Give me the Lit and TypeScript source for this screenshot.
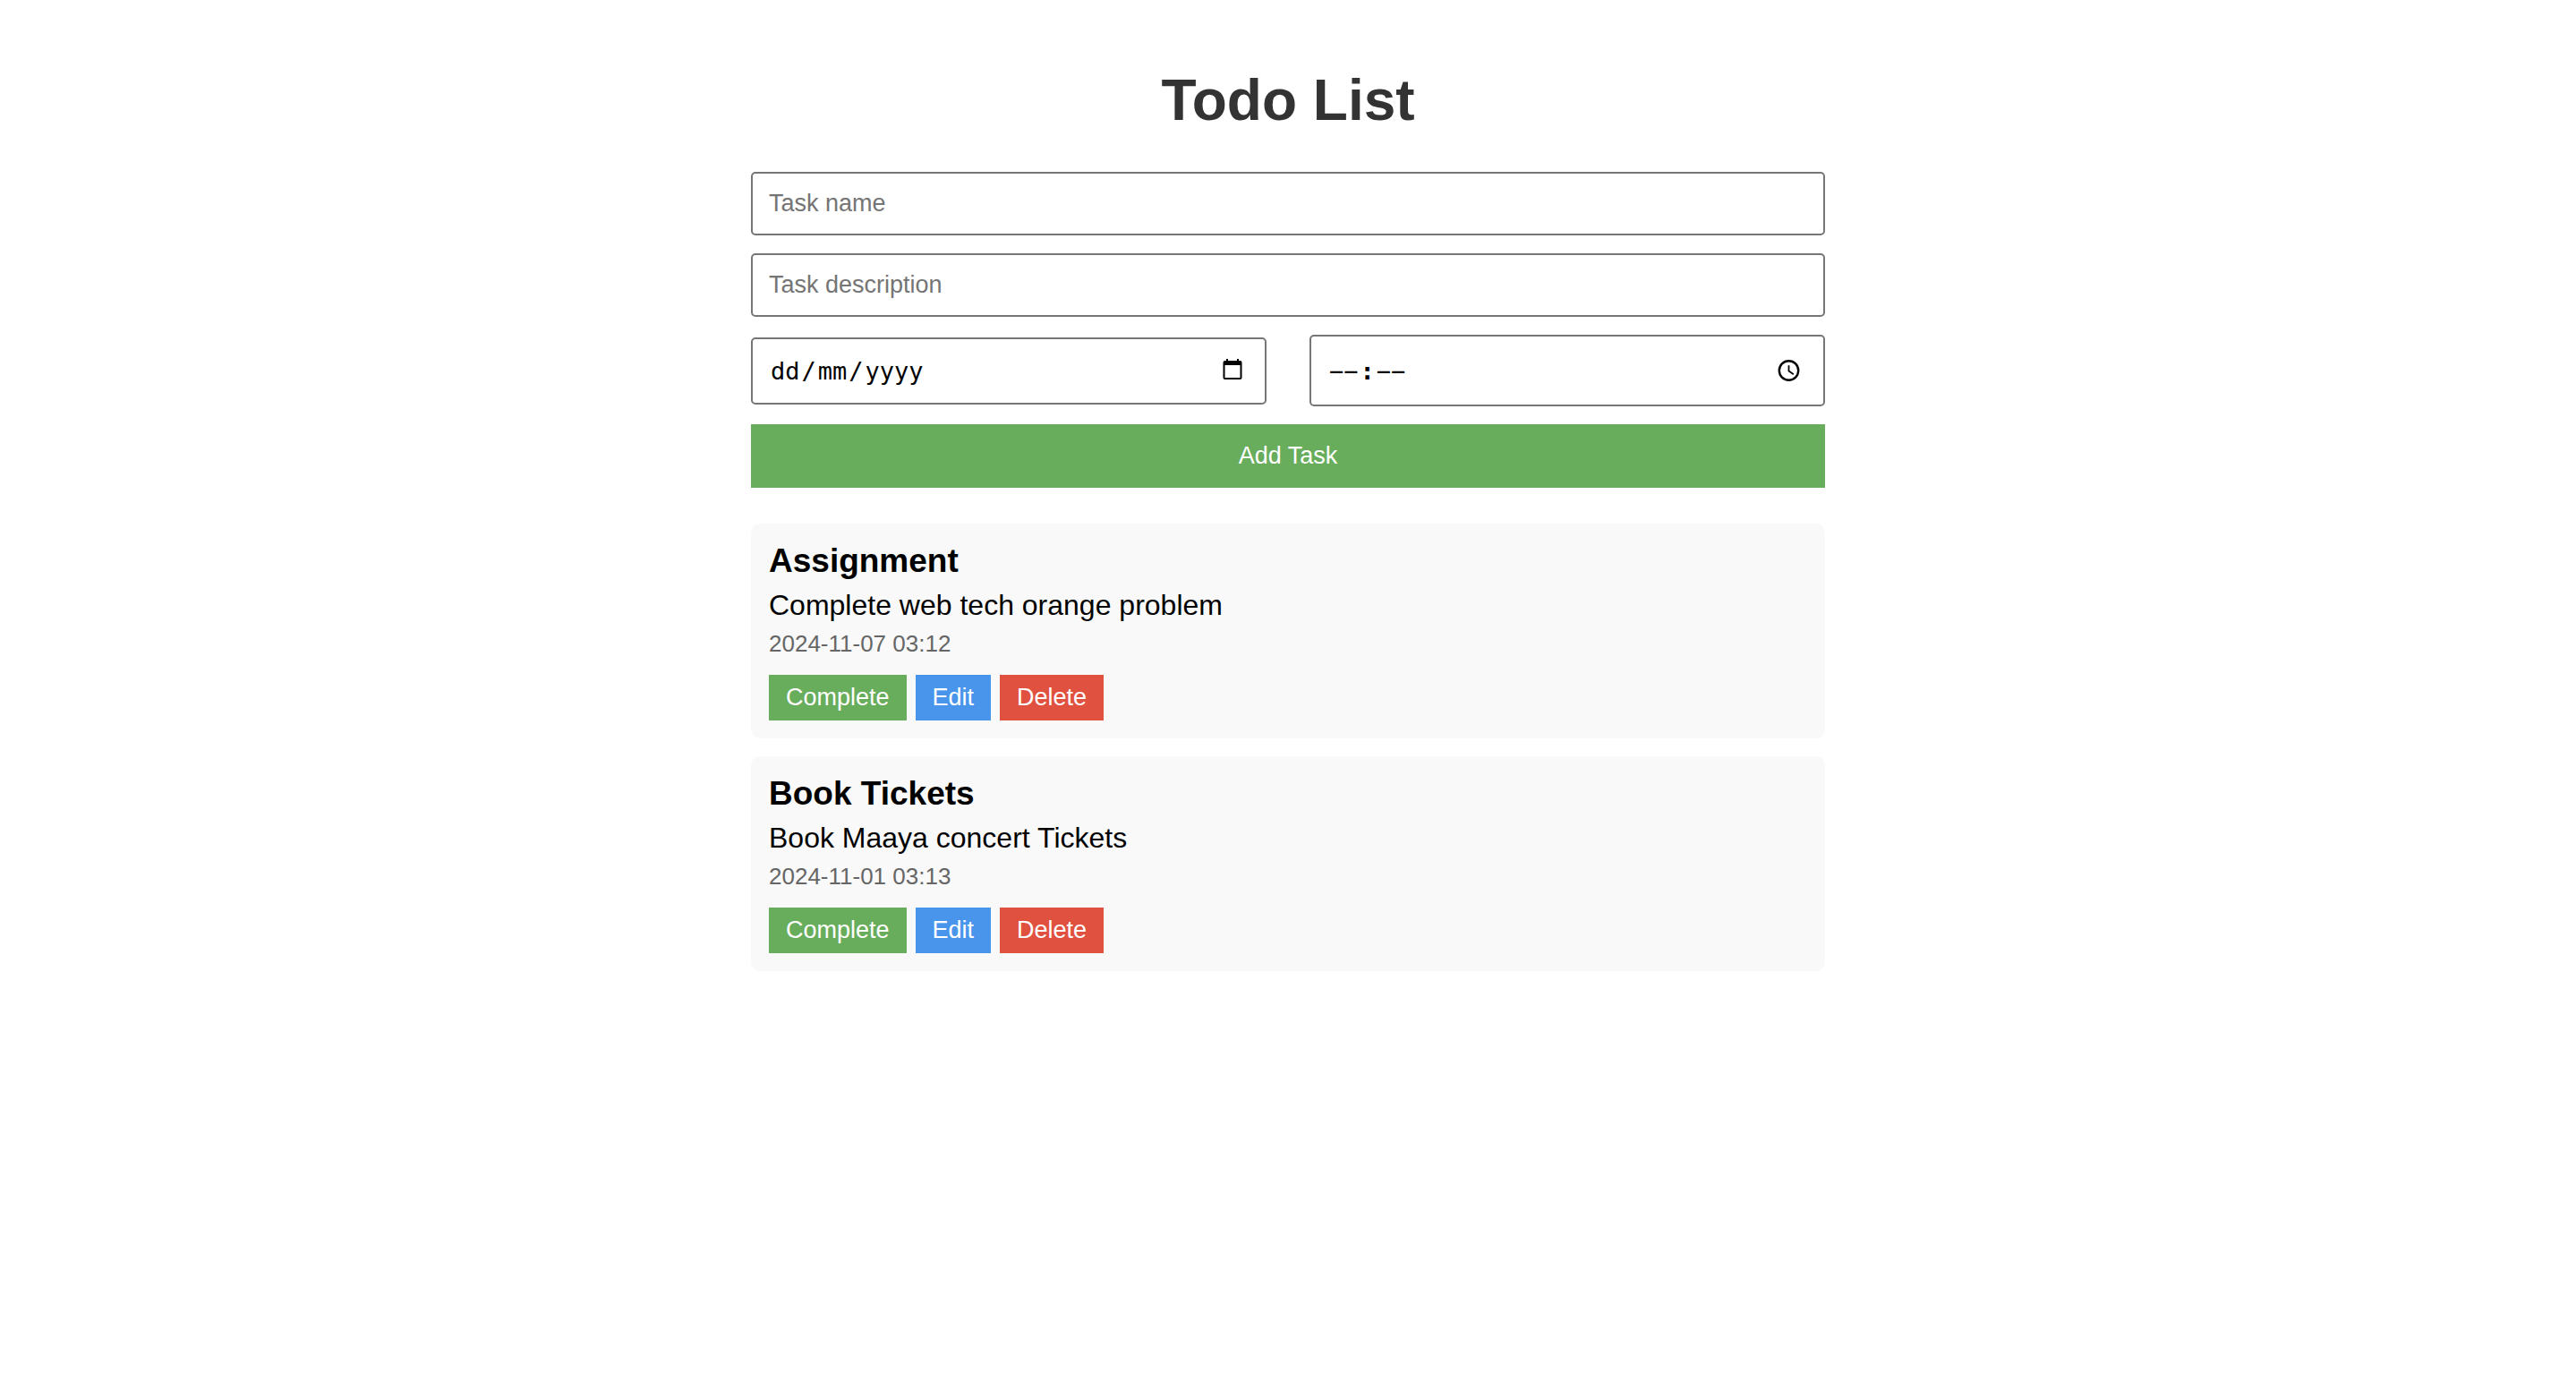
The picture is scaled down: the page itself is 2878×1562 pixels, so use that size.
import { LitElement, html, css } from "lit";
import { customElement, property, state } from "lit/decorators.js";

interface Task {
  name: string;
  description: string;
  due: string;
}

@customElement("todo-card")
export class TodoCard extends LitElement {
  @property({ attribute: false }) task!: Task;

  static styles = css`
    :host {
      display: block;
      padding: 20px;
      border-radius: 10px;
      background: #f9f9f9;
    }
    .name {
      margin: 0 0 10px;
      font-size: 37px;
      line-height: 43px;
      font-weight: bold;
    }
    .description {
      margin: 0 0 10px;
      font-size: 32px;
      line-height: 36px;
    }
    .due {
      display: block;
      font-size: 26px;
      line-height: 30px;
      color: #666;
    }
    .actions {
      display: flex;
      gap: 10px;
      margin-top: 20px;
    }
    .action {
      padding: 10px 19px;
      border: 0;
      font-family: inherit;
      font-size: 27px;
      line-height: 31px;
      color: #fff;
      cursor: pointer;
    }
    .complete {
      background: #68ad5c;
    }
    .edit {
      background: #4a95ec;
    }
    .delete {
      background: #e05140;
    }
  `;

  render() {
    return html`
      <h3 class="name">${this.task.name}</h3>
      <p class="description">${this.task.description}</p>
      <time class="due">${this.task.due}</time>
      <div class="actions">
        <button class="action complete" type="button">Complete</button>
        <button class="action edit" type="button">Edit</button>
        <button class="action delete" type="button">Delete</button>
      </div>
    `;
  }
}

@customElement("app-root")
export class AppRoot extends LitElement {
  @state() private tasks: Task[] = [
    {
      name: "Assignment",
      description: "Complete web tech orange problem",
      due: "2024-11-07 03:12",
    },
    {
      name: "Book Tickets",
      description: "Book Maaya concert Tickets",
      due: "2024-11-01 03:13",
    },
  ];

  static styles = css`
    :host {
      display: block;
      color: #000;
      font-family: "Liberation Sans", Arial, sans-serif;
    }
    * {
      box-sizing: border-box;
    }
    .page {
      max-width: 1200px;
      margin: 0 auto;
      padding: 76px 0 40px;
    }
    .title {
      margin: 0 0 44px;
      font-size: 64px;
      line-height: 72px;
      text-align: center;
      color: #333;
    }
    .form,
    .list {
      display: flex;
      flex-direction: column;
      gap: 20px;
    }
    .list {
      margin-top: 40px;
    }
    .text,
    .picker {
      border: 2px solid #767676;
      border-radius: 5px;
      background: #fff;
    }
    .text {
      width: 100%;
      padding: 18px;
      font-family: inherit;
      font-size: 27px;
      line-height: 31px;
    }
    .text::placeholder {
      color: #757575;
      opacity: 1;
    }
    .when {
      display: flex;
      align-items: center;
      justify-content: space-between;
    }
    .picker {
      display: flex;
      align-items: center;
      width: 48%;
      padding: 0 20px 0 18px;
      font-family: "DejaVu Sans Mono", monospace;
      font-size: 27px;
    }
    .date {
      height: 75px;
    }
    .time {
      height: 80px;
    }
    .part {
      width: calc(2ch + 4px);
      padding: 0 2px;
      border: 0;
      background: transparent;
      font: inherit;
      color: inherit;
    }
    .year {
      width: calc(4ch + 4px);
    }
    .part::placeholder {
      color: #000;
      opacity: 1;
    }
    .colon {
      font-weight: bold;
    }
    .open {
      display: flex;
      margin-left: auto;
      padding: 0;
      border: 0;
      background: transparent;
      color: #000;
      cursor: pointer;
    }
    .icon {
      display: block;
      width: 32px;
      height: 32px;
    }
    .add {
      padding: 20px;
      border: 0;
      background: #68ad5c;
      color: #fff;
      font-family: inherit;
      font-size: 27px;
      line-height: 31px;
      cursor: pointer;
    }
  `;

  render() {
    return html`
      <main class="page">
        <h1 class="title">Todo List</h1>
        <form class="form">
          <input class="text" type="text" placeholder="Task name" aria-label="Task name" />
          <input class="text" type="text" placeholder="Task description" aria-label="Task description" />
          <div class="when">
            <div class="picker date" role="group" aria-label="Date">
              <input class="part" type="text" maxlength="2" placeholder="dd" aria-label="Day" />
              <span>/</span>
              <input class="part" type="text" maxlength="2" placeholder="mm" aria-label="Month" />
              <span>/</span>
              <input class="part year" type="text" maxlength="4" placeholder="yyyy" aria-label="Year" />
              <button class="open" type="button" aria-label="Choose a date">
                <svg class="icon" viewBox="0 0 32 32">
                  <path
                    fill="currentColor"
                    fill-rule="evenodd"
                    d="M9 3h2v2h10V3h2v2h1.500A2 2 0 0 1 26.500 7v17a2 2 0 0 1-2 2h-17a2 2 0 0 1-2-2V7a2 2 0 0 1 2-2H9zM7.500 10v14h17V10z"
                  />
                </svg>
              </button>
            </div>
            <div class="picker time" role="group" aria-label="Time">
              <input class="part" type="text" maxlength="2" placeholder="−−" aria-label="Hours" />
              <span class="colon">:</span>
              <input class="part" type="text" maxlength="2" placeholder="−−" aria-label="Minutes" />
              <button class="open" type="button" aria-label="Choose a time">
                <svg class="icon" viewBox="0 0 32 32" fill="none" stroke="currentColor">
                  <circle cx="13.500" cy="16" r="10.700" stroke-width="2.400" />
                  <path d="M13.500 10.200v6.300l5.300 3.700" stroke-width="1.800" />
                </svg>
              </button>
            </div>
          </div>
          <button class="add" type="button">Add Task</button>
        </form>
        <section class="list">
          ${this.tasks.map((task) => html`<todo-card .task=${task}></todo-card>`)}
        </section>
      </main>
    `;
  }
}
